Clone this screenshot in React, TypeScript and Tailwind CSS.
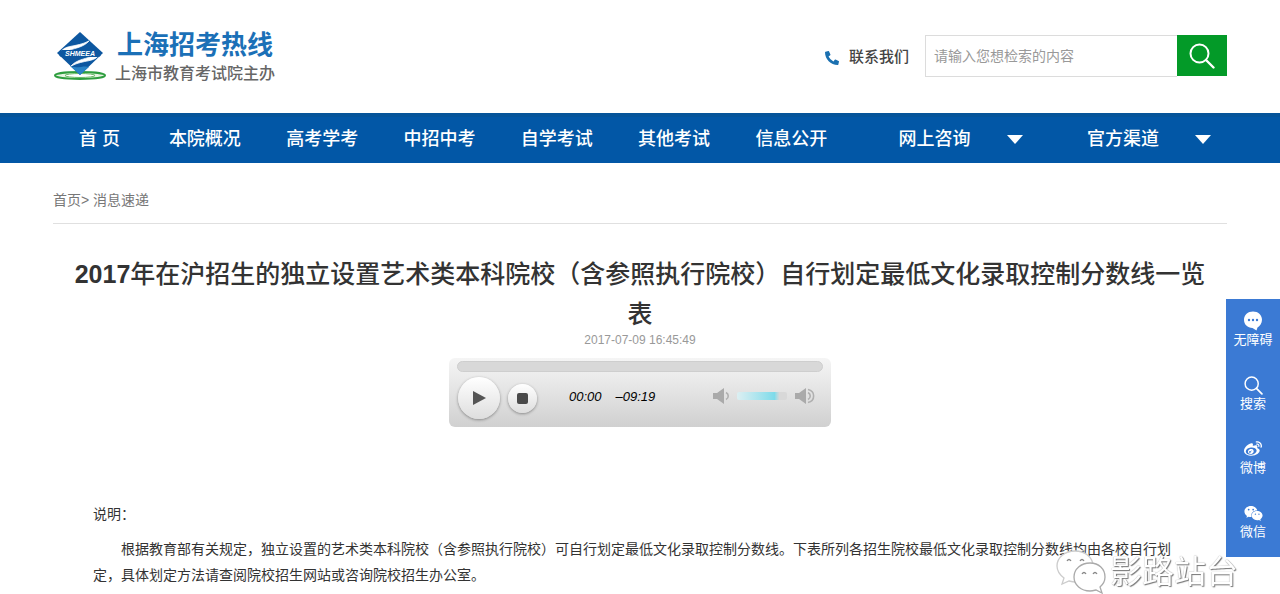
import { useState } from "react";
import { FaPhoneAlt, FaWeibo, FaWeixin } from "react-icons/fa";

const navItems = ["首 页", "本院概况", "高考学考", "中招中考", "自学考试", "其他考试", "信息公开"];
const navMenus = ["网上咨询", "官方渠道"];

function Logo() {
  return (
    <svg viewBox="0 0 54 50" className="w-[54px] h-[50px] shrink-0" aria-hidden="true">
      <ellipse cx="27" cy="43.500" rx="25" ry="3.400" fill="#e6f4e2" stroke="#2f9e3f" strokeWidth="2" />
      <ellipse cx="27" cy="43.500" rx="15" ry="2" fill="#fff" stroke="#67b963" strokeWidth="1" />
      <path d="M27 0 L50 21 L27 43 L4 21 Z" fill="#0d57a0" />
      <path d="M7 21 C12 12 22 16 36 9 C30 16 20 16 12 20" fill="#fff" stroke="#fff" strokeWidth="0.8" />
      <path d="M47 22 C41 31 32 27 18 34 C24 27 34 27 42 23" fill="#fff" stroke="#fff" strokeWidth="0.8" />
      <path d="M17 34 L27 43 L36 35 C31 33 24 37 17 34 Z" fill="#2a83c6" />
      <rect x="6" y="18" width="42" height="7" rx="3.500" fill="#0d57a0" />
      <text x="27" y="24" textAnchor="middle" fontSize="7" fontWeight="700" fontStyle="italic" fill="#fff">
        SHMEEA
      </text>
    </svg>
  );
}

function SearchIcon({ className }: { className: string }) {
  return (
    <svg viewBox="0 0 26 26" className={className} fill="none" stroke="currentColor" aria-hidden="true">
      <circle cx="10.500" cy="10.500" r="9" strokeWidth="2" />
      <path d="M17 17L24.500 24.500" strokeWidth="2.400" strokeLinecap="round" />
    </svg>
  );
}

function Header() {
  return (
    <header className="flex items-center justify-between h-[113px] px-[53px]">
      <a href="#" className="flex items-center gap-2">
        <Logo />
        <span className="flex flex-col pt-1">
          <span className="pl-0.5 text-[26px] leading-[30px] font-bold text-[#1b70b7]">上海招考热线</span>
          <span className="text-base leading-7 font-medium text-[#666]">上海市教育考试院主办</span>
        </span>
      </a>
      <div className="flex items-center">
        <a href="#" className="flex items-center gap-2.5 mr-4 pt-0.5 text-[15px] font-medium text-[#444]">
          <FaPhoneAlt className="size-3.5 -scale-x-100 rotate-90 text-[#1b70b0]" />
          联系我们
        </a>
        <form className="flex pb-px" onSubmit={(e) => e.preventDefault()}>
          <input
            type="text"
            aria-label="检索"
            placeholder="请输入您想检索的内容"
            className="w-[252px] h-[42px] px-2 border border-r-0 border-[#dcdcdc] text-sm text-[#444] placeholder:text-[#999] outline-none"
          />
          <button aria-label="搜索" className="flex items-center justify-center w-[50px] h-[41px] bg-[#039a28] text-white">
            <SearchIcon className="size-[26px]" />
          </button>
        </form>
      </div>
    </header>
  );
}

function Nav() {
  return (
    <nav className="h-[50px] px-[53px] bg-[#0257a6] border-t-4 border-[#05549a] text-lg font-medium text-white">
      <div className="grid grid-cols-[93fr_repeat(6,117fr)_188fr_188fr] items-center h-full pb-0.5">
        {navItems.map((item) => (
          <a key={item} href="#" className="text-center">
            {item}
          </a>
        ))}
        {navMenus.map((item) => (
          <button key={item} className="flex items-center justify-end gap-9 pr-4 font-medium">
            {item}
            <svg viewBox="0 0 16 9" className="w-4 h-[9px] fill-white" aria-hidden="true">
              <path d="M0 0H16L8 9Z" />
            </svg>
          </button>
        ))}
      </div>
    </nav>
  );
}

function Speaker({ loud }: { loud?: boolean }) {
  return (
    <svg viewBox="0 0 20 16" className="w-5 h-4 shrink-0" fill="none" stroke="#b0b0b0" strokeWidth="1.6" aria-hidden="true">
      <path d="M0 5H4L11 0V16L4 11H0Z" fill="#aaa" stroke="none" />
      <path d="M13 4.500C16 6 16 10 13 11.500" />
      {loud && <path d="M13 1.500C20.500 3 20.500 13 13 14.500" />}
    </svg>
  );
}

function Player() {
  const [position, setPosition] = useState(0);
  const [volume, setVolume] = useState(80);

  return (
    <div className="w-[382px] h-[69px] mx-auto mt-3 px-2 pt-[3px] rounded-md bg-linear-to-b from-[#f5f5f5] via-[#e3e3e3] to-[#d0d0d0]">
      <input
        type="range"
        aria-label="进度"
        value={position}
        onChange={(e) => setPosition(Number(e.target.value))}
        className="block w-full h-[11px] appearance-none rounded-full bg-[#d8d8d8] border border-[#cecece] [&::-webkit-slider-thumb]:appearance-none"
      />
      <div className="flex items-center h-[52px]">
        <button
          aria-label="播放"
          className="flex items-center justify-center size-[42px] ml-px rounded-full bg-linear-to-b from-white to-[#dedede] shadow-[0_1px_3px_#888]"
        >
          <svg viewBox="0 0 14 14" className="size-3.5 fill-[#555]" aria-hidden="true">
            <path d="M1 0L14 7L1 14Z" />
          </svg>
        </button>
        <button
          aria-label="停止"
          className="flex items-center justify-center size-[29px] ml-2 rounded-full bg-linear-to-b from-white to-[#dedede] shadow-[0_1px_3px_#888]"
        >
          <span className="size-[11px] rounded-xs bg-[#4a4a4a]" />
        </button>
        <span className="ml-8 pb-0.5 text-[13px] italic text-black">00:00</span>
        <span className="ml-3.5 pb-0.5 text-[13px] italic text-black">–09:19</span>
        <div className="flex items-center gap-1 ml-auto mr-2 pb-1">
          <Speaker />
          <input
            type="range"
            aria-label="音量"
            value={volume}
            onChange={(e) => setVolume(Number(e.target.value))}
            className="w-[50px] h-2 mr-1 appearance-none rounded-xs bg-linear-to-r from-[#dceff2] via-[#7ddbea] via-75% to-[#d8d8d8] to-85% [&::-webkit-slider-thumb]:appearance-none"
          />
          <Speaker loud />
        </div>
      </div>
    </div>
  );
}

function ChatIcon() {
  return (
    <svg viewBox="0 0 20 20" className="size-5" aria-hidden="true">
      <path d="M10 0.500C15 0.500 19 4 19 8.800C19 12.500 16.800 15.200 14.500 16.400L13.500 19.500L9.500 17C4.500 17 1 13.500 1 8.800C1 4 5 0.500 10 0.500Z" fill="#fff" />
      <g fill="#3b7ad4">
        <circle cx="6" cy="9" r="1.200" />
        <circle cx="10" cy="9" r="1.200" />
        <circle cx="14" cy="9" r="1.200" />
      </g>
    </svg>
  );
}

const sideLinks = [
  { label: "无障碍", icon: <ChatIcon /> },
  { label: "搜索", icon: <SearchIcon className="size-[19px]" /> },
  { label: "微博", icon: <FaWeibo size={18} /> },
  { label: "微信", icon: <FaWeixin size={19} /> },
];

function SideBar() {
  return (
    <aside className="fixed right-0 top-[299px] flex flex-col w-[54px] h-[258px] bg-[#3b7ad4] text-white">
      {sideLinks.map((link) => (
        <a key={link.label} href="#" className="flex flex-col items-center h-16 pt-3 text-[13px] leading-[18px]">
          <span className="flex items-center h-5">{link.icon}</span>
          {link.label}
        </a>
      ))}
    </aside>
  );
}

function Watermark() {
  return (
    <div className="fixed right-[42px] bottom-0 flex items-center gap-1 pointer-events-none">
      <svg viewBox="0 0 50 44" className="w-[50px] h-11" fill="#fff" stroke="#aaa" strokeWidth="1.300" aria-hidden="true">
        <path d="M19 1C9 1 1 7.500 1 16C1 21 4 25 8 28L6 34L13 31C15 31.500 17 32 20 32C30 32 37 25 37 16C37 7.500 29 1 19 1Z" stroke="#ccc" />
        <path d="M34 13C25 13 18 19 18 27C18 35 25 41 34 41C36 41 38 40.500 40 40L46 43L44 37C47 34.500 49 31 49 27C49 19 43 13 34 13Z" />
        <path d="M11 11Q13 8 15 11M24 11Q26 8 28 11M26 24Q28 21 30 24M37 24Q39 21 41 24" fill="none" stroke="#888" />
      </svg>
      <span className="text-[32px] leading-[42px] text-white [text-shadow:1px_1px_1px_#777,0_0_1px_#999]">影路站台</span>
    </div>
  );
}

export default function App() {
  return (
    <div
      lang="zh-CN"
      className="min-h-screen bg-white font-['Liberation_Sans','Noto_Sans_CJK_SC',sans-serif] text-[#333]"
    >
      <Header />
      <Nav />
      <main className="px-[53px]">
        <div className="pt-[26px] pb-3 border-b border-[#e0e0e0] text-sm leading-[22px] text-[#777]">
          <a href="#">首页</a>&gt; <a href="#">消息速递</a>
        </div>
        <article>
          <h1 className="px-4 pt-[30px] text-center text-[25px] leading-10 font-medium">
            <span className="font-bold">2017</span>
            年在沪招生的独立设置艺术类本科院校（含参照执行院校）自行划定最低文化录取控制分数线一览表
          </h1>
          <p className="text-center text-xs leading-3 text-[#999]">2017-07-09 16:45:49</p>
          <Player />
          <div className="px-10 pt-[74px] text-sm leading-[26px]">
            <p>说明：</p>
            <p className="mt-[9px] indent-[28px]">
              根据教育部有关规定，独立设置的艺术类本科院校（含参照执行院校）可自行划定最低文化录取控制分数线。下表所列各招生院校最低文化录取控制分数线均由各校自行划定，具体划定方法请查阅院校招生网站或咨询院校招生办公室。
            </p>
          </div>
        </article>
      </main>
      <SideBar />
      <Watermark />
    </div>
  );
}
